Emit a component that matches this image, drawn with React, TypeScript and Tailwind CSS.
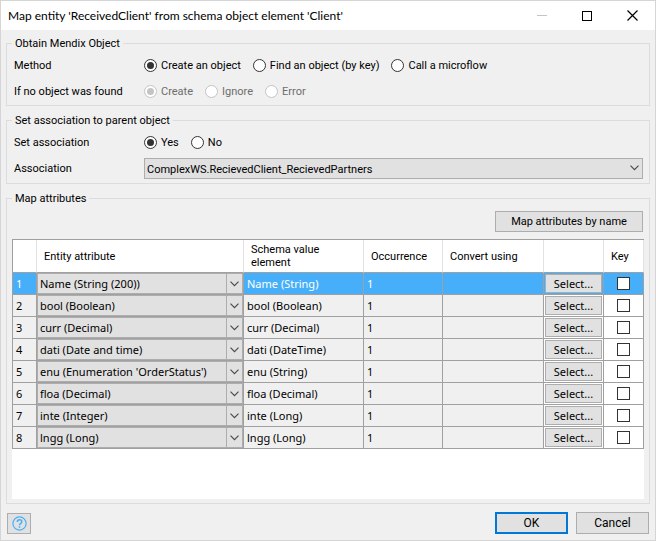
import type { ReactNode } from "react";

const ui = "font-['Roboto','Liberation_Sans',sans-serif]";
const grid = "font-['Noto_Sans','Open_Sans',sans-serif]";

const rows = [
  { attribute: "Name (String (200))", element: "Name (String)" },
  { attribute: "bool (Boolean)", element: "bool (Boolean)" },
  { attribute: "curr (Decimal)", element: "curr (Decimal)" },
  { attribute: "dati (Date and time)", element: "dati (DateTime)" },
  { attribute: "enu (Enumeration 'OrderStatus')", element: "enu (String)" },
  { attribute: "floa (Decimal)", element: "floa (Decimal)" },
  { attribute: "inte (Integer)", element: "inte (Long)" },
  { attribute: "lngg (Long)", element: "lngg (Long)" },
];

function Chevron() {
  return (
    <svg width="9" height="6" viewBox="0 0 9 6" fill="none" stroke="#4c4c4c" strokeWidth="1.2" aria-hidden="true">
      <path d="M0.5 0.7 4.5 4.7 8.5 0.7" />
    </svg>
  );
}

function Radio({ name, label, checked, disabled }: { name: string; label: string; checked?: boolean; disabled?: boolean }) {
  return (
    <label className={`flex items-center gap-1 ${disabled ? "text-[#6d6d6d]" : ""}`}>
      <input
        type="radio"
        name={name}
        defaultChecked={checked}
        disabled={disabled}
        className="grid size-[13px] shrink-0 appearance-none place-items-center rounded-full border border-[#333] bg-white before:size-[7px] before:rounded-full checked:before:bg-[#333] disabled:border-[#c4c4c4] disabled:checked:before:bg-[#c4c4c4]"
      />
      {label}
    </label>
  );
}

function Group({ title, className, children }: { title: string; className: string; children: ReactNode }) {
  return (
    <fieldset className={`min-w-0 border border-[#dcdcdc] ${className}`}>
      <legend className="ml-[5px] px-[3px] pt-px leading-[13px]">{title}</legend>
      {children}
    </fieldset>
  );
}

function Row({ label, children }: { label: ReactNode; children: ReactNode }) {
  return (
    <div className="flex h-[26px] items-center pr-[6px] pl-[7px]">
      <div className="w-[130px] shrink-0">{label}</div>
      {children}
    </div>
  );
}

const button = "border border-[#adadad] bg-[#e1e1e1] text-center";
const head = "border-r border-b border-r-[#e2e2e2] border-b-[#a0a0a0] bg-white pl-[7px] text-left font-normal";
const cell = "border-r border-b border-[#a0a0a0] p-0";

export default function App() {
  return (
    <main className={`flex min-h-screen flex-col border border-[#d5d5d5] bg-[#f0f0f0] text-[11px] leading-[15px] text-black ${ui}`}>
      <header className="flex h-[29px] items-center justify-between bg-white pl-[7px]">
        <h1 className="font-['Lato','Noto_Sans',sans-serif] text-[12px]">Map entity 'ReceivedClient' from schema object element 'Client'</h1>
        <div className="flex">
          <button aria-label="Minimize" disabled className="grid h-[29px] w-[45px] place-items-center">
            <svg width="10" height="10" viewBox="0 0 10 10" stroke="#c4c4c4" shapeRendering="crispEdges"><path d="M0 4.5H10" /></svg>
          </button>
          <button aria-label="Maximize" className="grid h-[29px] w-[46px] place-items-center">
            <svg width="10" height="10" viewBox="0 0 10 10" fill="none" stroke="#000" shapeRendering="crispEdges"><path d="M.5 .5H9.5V9.5H.5Z" /></svg>
          </button>
          <button aria-label="Close" className="grid h-[29px] w-[45px] place-items-center">
            <svg width="11" height="11" viewBox="0 0 11 11" stroke="#000" strokeWidth="1.2"><path d="M.5 .5 10.5 10.5M10.5 .5 .5 10.5" /></svg>
          </button>
        </div>
      </header>

      <div className="flex flex-1 flex-col gap-[7px] px-[5px] pt-[6px]">
        <Group title="Obtain Mendix Object" className="pb-px">
          <div className="pt-[2px]">
            <Row label="Method">
              <div className="flex gap-3">
                <Radio name="method" label="Create an object" checked />
                <Radio name="method" label="Find an object (by key)" />
                <Radio name="method" label="Call a microflow" />
              </div>
            </Row>
            <Row label="If no object was found">
              <div className="flex gap-3">
                <Radio name="fallback" label="Create" checked disabled />
                <Radio name="fallback" label="Ignore" disabled />
                <Radio name="fallback" label="Error" disabled />
              </div>
            </Row>
          </div>
        </Group>

        <Group title="Set association to parent object" className="pb-[2px]">
          <div className="pt-[2px]">
            <Row label="Set association">
              <div className="flex gap-3">
                <Radio name="association" label="Yes" checked />
                <Radio name="association" label="No" />
              </div>
            </Row>
            <Row label={<label htmlFor="assoc">Association</label>}>
              <div className="relative flex-1">
                <select id="assoc" className="block h-[21px] w-full appearance-none border border-[#adadad] bg-[#e1e1e1] pt-[2px] pr-5 pl-[2px]">
                  <option>ComplexWS.RecievedClient_RecievedPartners</option>
                </select>
                <span className="pointer-events-none absolute inset-y-0 right-1 flex items-center"><Chevron /></span>
              </div>
            </Row>
          </div>
        </Group>

        <Group title="Map attributes" className="pb-1">
          <div className="flex justify-end pt-[6px] pr-[6px] pb-[7px]">
            <button className={`h-[21px] w-[148px] ${button}`}>Map attributes by name</button>
          </div>
          <div className="mx-[5px] min-h-[260px] bg-white">
            <table className="w-full table-fixed border-separate border-spacing-0 border-t border-l border-[#a0a0a0]">
              <colgroup>
                <col className="w-[24px]" />
                <col />
                <col className="w-[120px]" />
                <col className="w-[79px]" />
                <col className="w-[101px]" />
                <col className="w-[60px]" />
                <col className="w-[40px]" />
              </colgroup>
              <thead>
                <tr className="h-[33px]">
                  <th className={head} aria-label="Row" />
                  <th className={head}>Entity attribute</th>
                  <th className={head}><span className="block w-[75px] leading-[13px]">Schema value element</span></th>
                  <th className={head}>Occurrence</th>
                  <th className={head}>Convert using</th>
                  <th className={head} aria-label="Select" />
                  <th className={head}>Key</th>
                </tr>
              </thead>
              <tbody className={`leading-[14px] ${grid}`}>
                {rows.map((row, i) => {
                  const tone = i === 0 ? "bg-[#47aff9] text-white" : "bg-[#f0f0f0]";
                  const plain = i === 0 ? "bg-[#47aff9]" : "bg-white";
                  return (
                    <tr key={row.attribute} className="h-[22px]">
                      <td className={`${cell} ${tone}`}><span className="pl-[3px]">{i + 1}</span></td>
                      <td className={cell}>
                        <div className="relative">
                          <select aria-label={`Entity attribute ${i + 1}`} className="block h-[21px] w-full appearance-none border border-[#adadad] bg-[#e1e1e1] pr-5 pl-[2px] text-black">
                            <option>{row.attribute}</option>
                          </select>
                          <span className="pointer-events-none absolute inset-y-px right-px flex w-4 items-center justify-center border-l border-[#adadad]"><Chevron /></span>
                        </div>
                      </td>
                      <td className={`${cell} ${tone}`}><span className="pl-[3px]">{row.element}</span></td>
                      <td className={`${cell} ${tone}`}><span className="pl-[3px]">1</span></td>
                      <td className={`${cell} ${tone}`} />
                      <td className={`${cell} ${plain}`}>
                        <button className={`mx-auto block h-[19px] w-[57px] ${button}`}>Select...</button>
                      </td>
                      <td className={`${cell} ${plain}`}>
                        <input type="checkbox" aria-label={`Key ${i + 1}`} className="mx-auto block size-[13px] appearance-none border border-[#333] bg-white" />
                      </td>
                    </tr>
                  );
                })}
              </tbody>
            </table>
          </div>
        </Group>
      </div>

      <footer className="flex items-center gap-2 px-[6px] pt-2 pb-[6px]">
        <button aria-label="Help" className={`mr-auto grid h-[21px] w-6 place-items-center ${button}`}>
          <svg width="15" height="15" viewBox="0 0 15 15" fill="none" stroke="#47aff9" strokeWidth="1.2">
            <circle cx="7.5" cy="7.5" r="6.6" />
            <path d="M5.3 5.9C5.3 2.9 9.8 3 9.8 5.7C9.8 7.4 7.5 7.3 7.5 9.2M7.5 10.2V11.7" strokeWidth="1.5" />
          </svg>
        </button>
        <button className="h-[22px] w-[73px] border-2 border-[#0078d7] bg-[#e1e1e1] text-[12px]">OK</button>
        <button className={`h-[22px] w-[73px] text-[12px] ${button}`}>Cancel</button>
      </footer>
    </main>
  );
}
